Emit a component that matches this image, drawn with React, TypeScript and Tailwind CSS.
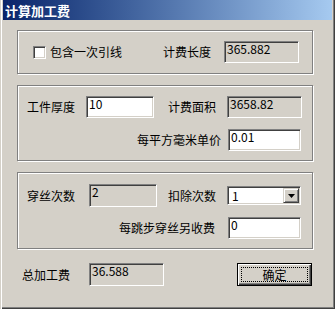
import React from "react";

// 经典 Windows 凹陷边框（文本框、复选框）
const sunken =
  "border border-t-[#808080] border-l-[#808080] border-b-white border-r-white shadow-[inset_1px_1px_0_#404040,inset_-1px_-1px_0_#d4d0c8]";

// 分组框的蚀刻边
const etched =
  "border border-[#808080] shadow-[1px_1px_0_#fff,inset_1px_1px_0_#fff]";

function Label({ text, className = "" }: { text: string; className?: string }) {
  return (
    <span className={`shrink-0 whitespace-nowrap leading-[14px] ${className}`}>
      {text}
    </span>
  );
}

function Field({
  value,
  readOnly = false,
  className = "",
}: {
  value: string;
  readOnly?: boolean;
  className?: string;
}) {
  return (
    <div
      className={`shrink-0 ${sunken} ${
        readOnly ? "bg-[#d4d0c8]" : "bg-white"
      } pl-[2px] pt-[1px] leading-[12px] ${className}`}
    >
      {value}
    </div>
  );
}

function Combo({ value, className = "" }: { value: string; className?: string }) {
  return (
    <div className={`shrink-0 flex items-stretch bg-white p-[1px] ${sunken} ${className}`}>
      <span className="flex-1 pl-[3px] pt-[2px] leading-[12px]">{value}</span>
      <span className="w-[16px] flex items-center justify-center bg-[#d4d0c8] border border-t-[#d4d0c8] border-l-[#d4d0c8] border-b-[#404040] border-r-[#404040] shadow-[inset_1px_1px_0_#fff,inset_-1px_-1px_0_#808080]">
        <svg width="7" height="4" viewBox="0 0 7 4">
          <polygon points="0,0 7,0 3.5,4" fill="#000" />
        </svg>
      </span>
    </div>
  );
}

export default function App() {
  return (
    <div className="w-[335px] h-[309px] bg-[#d4d0c8] flex flex-col text-[12px] text-black font-['Noto_Sans_CJK_SC',sans-serif] shadow-[inset_1px_0_0_#d4d0c8,inset_2px_0_0_#fff,inset_-1px_-1px_0_#404040,inset_-2px_-2px_0_#808080]">
      {/* 标题栏 */}
      <div className="mx-[3px] h-[20px] shrink-0 bg-linear-to-r from-[#0a246a] to-[#a6caf0] flex items-center pl-[2px] pt-[1px] text-white font-bold text-[13px] leading-none">
        计算加工费
      </div>

      <div className="flex flex-col pl-[17px]">
        {/* 引线 / 计费长度 */}
        <div className={`mt-[10px] w-[296px] h-[44px] ${etched} flex items-center pl-[15px]`}>
          <span className={`w-[13px] h-[13px] shrink-0 bg-white ${sunken}`} />
          <Label text="包含一次引线" className="ml-[4px] w-[72px]" />
          <Label text="计费长度" className="ml-[41px] w-[48px]" />
          <Field value="365.882" readOnly className="ml-[13px] w-[75px] h-[22px]" />
        </div>

        {/* 厚度 / 面积 / 单价 */}
        <div className={`mt-[11px] w-[296px] h-[76px] ${etched} flex flex-col pt-[10px]`}>
          <div className="flex items-center h-[22px] pl-[9px]">
            <Label text="工件厚度" className="w-[48px]" />
            <Field value="10" className="ml-[11px] w-[68px] h-[22px]" />
            <Label text="计费面积" className="ml-[14px] w-[48px]" />
            <Field value="3658.82" readOnly className="ml-[11px] w-[75px] h-[22px]" />
          </div>
          <div className="flex items-center h-[22px] mt-[11px] pl-[119px]">
            <Label text="每平方毫米单价" className="w-[84px]" />
            <Field value="0.01" className="ml-[7px] w-[73px] h-[22px]" />
          </div>
        </div>

        {/* 穿丝 */}
        <div className={`mt-[11px] w-[296px] h-[77px] ${etched} flex flex-col pt-[11px]`}>
          <div className="flex items-center h-[23px] pl-[9px]">
            <Label text="穿丝次数" className="w-[48px]" />
            <Field value="2" readOnly className="ml-[14px] w-[68px] h-[23px]" />
            <Label text="扣除次数" className="ml-[11px] w-[48px]" />
            <Combo value="1" className="ml-[11px] w-[74px] h-[19px]" />
          </div>
          <div className="flex items-center h-[22px] mt-[10px] pl-[101px]">
            <Label text="每跳步穿丝另收费" className="w-[96px]" />
            <Field value="0" className="ml-[13px] w-[73px] h-[22px]" />
          </div>
        </div>

        {/* 合计与确定 */}
        <div className="mt-[14px] flex items-center h-[23px]">
          <Label text="总加工费" className="ml-[5px] w-[48px]" />
          <Field value="36.588" readOnly className="ml-[19px] w-[75px] h-[23px]" />
          <button className="ml-[73px] w-[75px] h-[23px] shrink-0 flex p-[3px] bg-[#d4d0c8] border border-black shadow-[inset_1px_1px_0_#fff,inset_-1px_-1px_0_#404040,inset_-2px_-2px_0_#808080]">
            <span className="flex-1 flex items-center justify-center border border-dotted border-black leading-none">
              确定
            </span>
          </button>
        </div>
      </div>
    </div>
  );
}
